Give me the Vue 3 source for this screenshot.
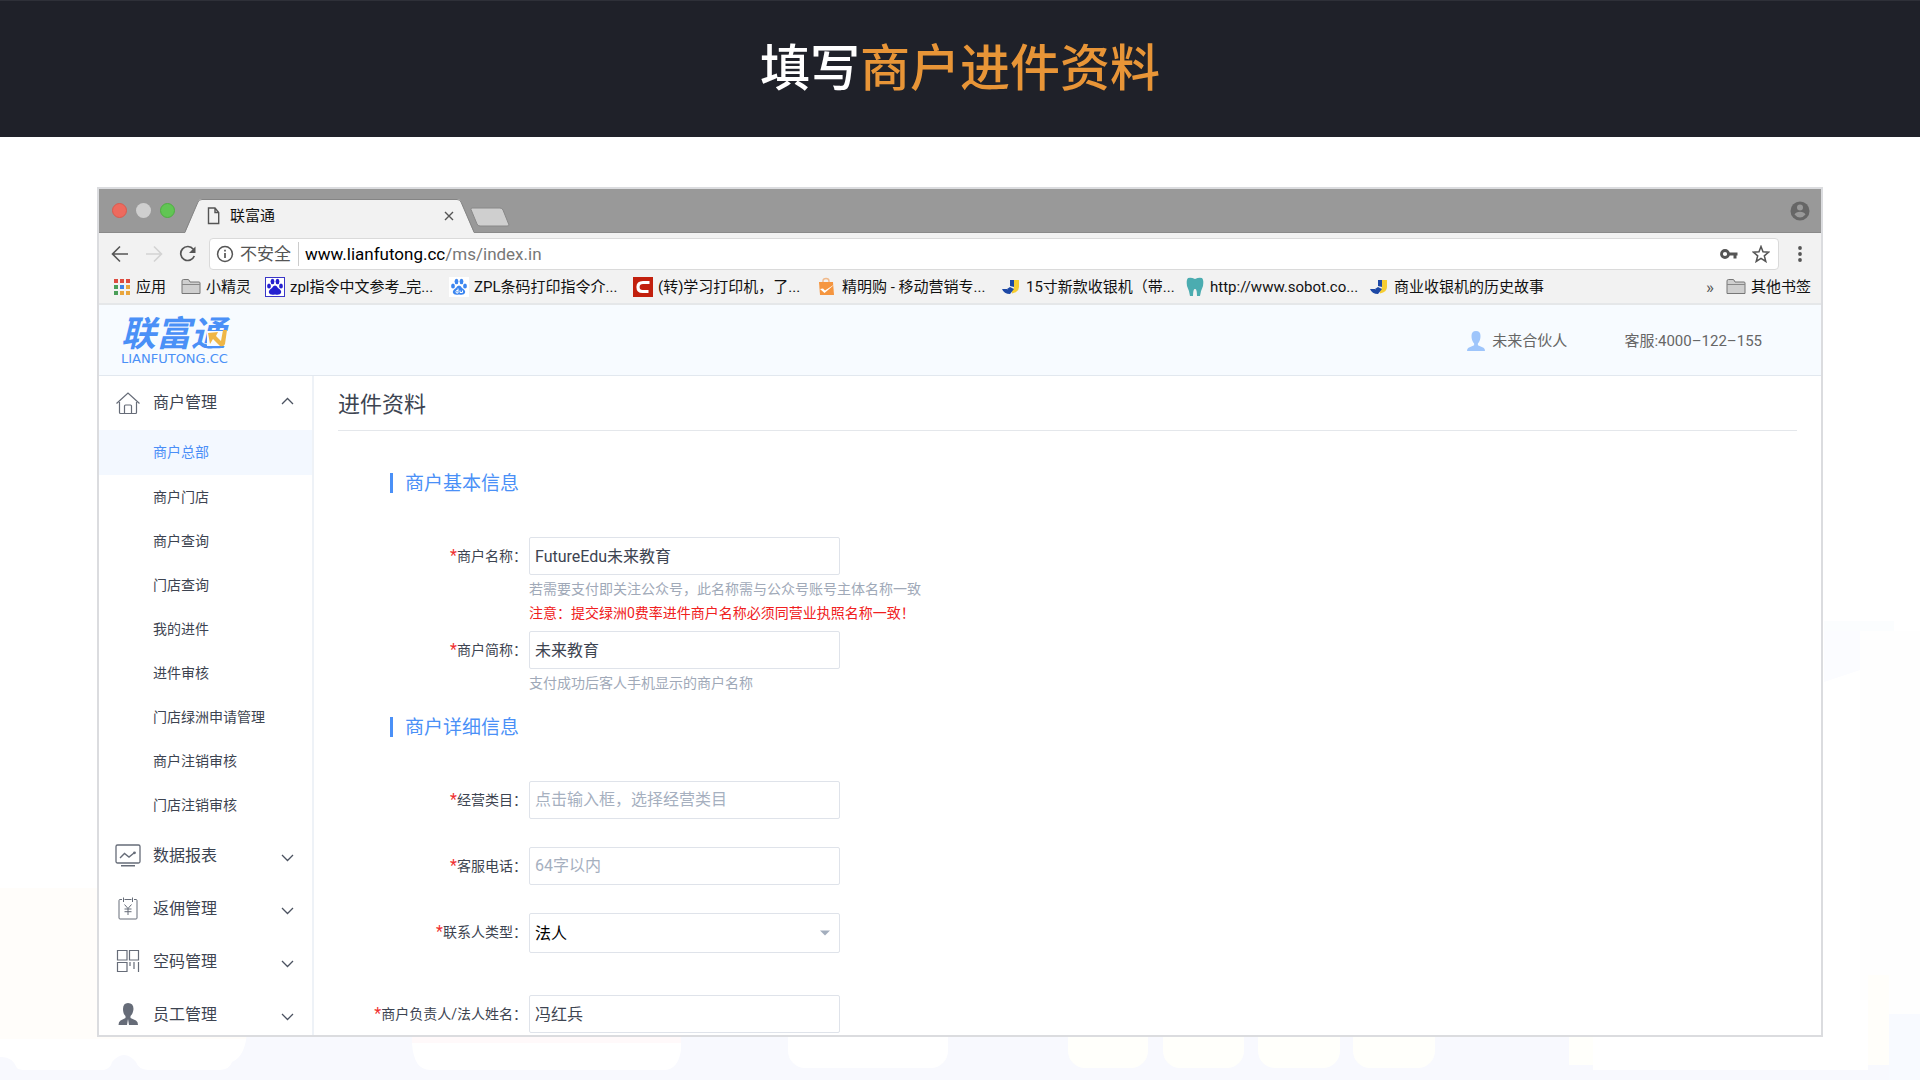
<script setup>
import { ref } from 'vue'

const bookmarks = [
  { icon: 'paw-box', text: 'zpl指令中文参考_完...' },
  { icon: 'paw', text: 'ZPL条码打印指令介...' },
  { icon: 'c', text: '(转)学习打印机，了...' },
  { icon: 'bag', text: '精明购 - 移动营销专...' },
  { icon: 'j', text: '15寸新款收银机（带...' },
  { icon: 'tooth', text: 'http://www.sobot.co...' },
  { icon: 'j', text: '商业收银机的历史故事' },
]
const appDots = ['#de4b3f', '#de4b3f', '#de4b3f', '#4a9e58', '#3f82e8', '#e9a53c', '#4a9e58', '#e9a53c', '#e9a53c']
const subItems = ['商户总部', '商户门店', '商户查询', '门店查询', '我的进件', '进件审核', '门店绿洲申请管理', '商户注销审核', '门店注销审核']
const groups = [
  { icon: 'chart', text: '数据报表' },
  { icon: 'yen', text: '返佣管理' },
  { icon: 'code', text: '空码管理' },
  { icon: 'person', text: '员工管理' },
]
const name = ref('FutureEdu未来教育')
const shortName = ref('未来教育')
const category = ref('')
const phone = ref('')
const contactType = ref('法人')
const owner = ref('冯红兵')
</script>

<template>
  <div class="page">
    <svg class="decor" viewBox="0 600 1920 480" preserveAspectRatio="none" aria-hidden="true">
      <rect x="1824" y="621" width="70" height="10" fill="#fbfdfe" />
      <path d="M1824 631H1860V670L1824 682Z" fill="#fbfcff" />
      <rect x="1860" y="631" width="60" height="383" fill="#fefefe" />
      <rect y="888" width="247" height="151" fill="#fffdfa" />
      <path d="M0 1057Q12 1056 17 1068Q19 1070 26 1070H104Q111 1068 112 1062Q124 1048 136 1062Q138 1069 148 1070H220Q230 1069 232 1062Q246 1056 247 1030H1920V1080H0Z" fill="#f8f9fe" />
      <path d="M412 1030H681V1050Q678 1070 664 1070H430Q414 1070 412 1044Z" fill="#fff" />
      <rect x="412" y="1030" width="269" height="13" fill="#fff9fa" />
      <rect x="788" y="1000" width="160" height="68" rx="17" fill="#fff" />
      <rect x="1068" y="1000" width="80" height="68" rx="17" fill="#fffffb" />
      <rect x="1163" y="1000" width="81" height="68" rx="17" fill="#fffffb" />
      <rect x="1258" y="1000" width="82" height="68" rx="17" fill="#fffffb" />
      <rect x="1353" y="1000" width="82" height="68" rx="17" fill="#fffffb" />
      <rect x="1569" y="1000" width="24" height="65" fill="#fffffb" />
      <rect x="1593" y="1000" width="275" height="70" fill="#fff" />
      <rect x="1868" y="975" width="21" height="90" fill="#fffefa" />
      <rect x="1889" y="1014" width="31" height="66" fill="#f8faff" />
    </svg>

    <header class="banner">
      <h1>填写<span>商户进件资料</span></h1>
    </header>

    <div class="window">
      <div class="tabstrip">
        <div class="lights"><i class="red"></i><i class="grey"></i><i class="green"></i></div>
        <div class="tab">
          <svg class="tab-shape" viewBox="0 0 289 34" preserveAspectRatio="none" aria-hidden="true">
            <path d="M0 34L13 3Q14 0 17 0H272Q275 0 276 3L289 34Z" fill="#f2f2f2" />
            <path d="M0 33L13 3Q14 .5 17 .5H272Q275 .5 276 3L289 33" fill="none" stroke="#858585" />
          </svg>
          <svg class="doc" viewBox="0 0 12 18" aria-hidden="true"><path d="M1 1H7.5L11.200 5.500V16.500H1ZM7.500 1V5.500H11" fill="none" stroke="#555" stroke-width="1.400" /></svg>
          <span class="tab-title">联富通</span>
          <button class="plain" aria-label="关闭标签页">
            <svg width="10" height="10" viewBox="0 0 10 10"><path d="M1 1L9 9M9 1L1 9" stroke="#555" stroke-width="1.400" /></svg>
          </button>
        </div>
        <button class="plain newtab" aria-label="新标签页">
          <svg width="40" height="20" viewBox="0 0 40 20"><path d="M2 1H30Q32 1 33 3L39 18Q39 19 37 19H10Q8 19 7 17L1 2.500Q1 1 2 1Z" fill="#cfcfcf" stroke="#888" /></svg>
        </button>
        <svg class="profile" width="20" height="20" viewBox="0 0 20 20" aria-hidden="true">
          <circle cx="10" cy="10" r="9.500" fill="#666" /><circle cx="10" cy="6.500" r="3" fill="#999" /><path d="M4.500 13.500Q6 10.800 10 10.800T15.500 13.500Q13 16.500 10 16.500T4.500 13.500Z" fill="#999" />
        </svg>
      </div>

      <div class="toolbar">
        <button class="plain" aria-label="后退"><svg width="18" height="18" viewBox="0 0 18 18"><path d="M17 9H2M9 1.500L1.500 9L9 16.500" fill="none" stroke="#555" stroke-width="1.600" /></svg></button>
        <button class="plain" aria-label="前进"><svg width="18" height="18" viewBox="0 0 18 18"><path d="M1 9H16M9 1.500L16.500 9L9 16.500" fill="none" stroke="#d3d3d3" stroke-width="1.600" /></svg></button>
        <button class="plain" aria-label="刷新"><svg width="18" height="18" viewBox="0 0 18 18"><path d="M14.300 4.200A7 7 0 1 0 15.300 11" fill="none" stroke="#555" stroke-width="1.700" /><path d="M16.500 1.500V8H10Z" fill="#555" /></svg></button>
        <div class="omnibox">
          <svg width="18" height="18" viewBox="0 0 18 18" aria-hidden="true"><circle cx="9" cy="9" r="7.400" fill="none" stroke="#555" stroke-width="1.500" /><path d="M9 8V13M9 4.800V6.600" stroke="#555" stroke-width="1.700" /></svg>
          <span class="insecure">不安全</span>
          <span class="url"><b>www.lianfutong.cc</b>/ms/index.in</span>
          <svg class="key" width="18" height="12" viewBox="0 0 18 12" aria-hidden="true"><circle cx="5" cy="6" r="3.500" fill="none" stroke="#555" stroke-width="2.800" /><path d="M8 6H17.500M15 6V10.500" stroke="#555" stroke-width="3" /></svg>
          <svg width="18" height="18" viewBox="0 0 18 18" aria-hidden="true"><path d="M9 1.500L11 6.800L16.700 7.200L12.300 10.800L13.800 16.500L9 13.400L4.200 16.500L5.700 10.800L1.300 7.200L7 6.800Z" fill="none" stroke="#555" stroke-width="1.500" /></svg>
        </div>
        <button class="plain" aria-label="菜单"><svg width="6" height="18" viewBox="0 0 6 18"><g fill="#555"><circle cx="3" cy="3" r="1.900" /><circle cx="3" cy="9" r="1.900" /><circle cx="3" cy="15" r="1.900" /></g></svg></button>
      </div>

      <nav class="bookmarks" aria-label="书签">
        <a href="#" class="apps">
          <svg width="18" height="20" viewBox="0 0 18 20"><rect v-for="(c, i) in appDots" :key="i" :x="1 + (i % 3) * 6" :y="2 + Math.floor(i / 3) * 6" width="4" height="4" :fill="c" /></svg>应用</a>
        <a href="#" class="folder">
          <svg width="20" height="20" viewBox="0 0 20 20"><path d="M1 16.500V4Q1 2.500 2.500 2.500H7Q8 2.500 8.500 4L9 5H18Q19 5 19 6V16.500Z" fill="#cfcfcf" stroke="#777" /><path d="M1 7.500H19" stroke="#888" /></svg>小精灵</a>
        <a v-for="b in bookmarks" :key="b.text" href="#" class="mark">
          <svg v-if="b.icon === 'paw-box' || b.icon === 'paw'" width="20" height="20" viewBox="0 0 20 20" :class="b.icon">
            <rect v-if="b.icon === 'paw-box'" x=".5" y=".5" width="19" height="19" fill="#fff" stroke="#3a36c8" />
            <rect v-else width="20" height="20" fill="#fff" />
            <g fill="currentColor"><ellipse cx="4" cy="9" rx="1.900" ry="2.500" /><ellipse cx="7.500" cy="4.500" rx="1.900" ry="2.700" /><ellipse cx="12.500" cy="4.500" rx="1.900" ry="2.700" /><ellipse cx="16" cy="9" rx="1.900" ry="2.500" /><path d="M10 8.500Q12 8.500 13 11Q17 13.500 16 16Q15 18.500 10 17.500Q5 18.500 4 16Q3 13.500 7 11Q8 8.500 10 8.500Z" /></g>
            <path v-if="b.icon === 'paw'" d="M9 11.500V16H7.500Q6.300 14.800 7.500 13.500H9M11 13.500V15.500H13.500V13.500" fill="none" stroke="#fff" />
          </svg>
          <svg v-else-if="b.icon === 'c'" width="20" height="20" viewBox="0 0 20 20"><rect width="20" height="20" fill="#c2200e" /><path d="M16.500 5.500H10Q5 5.500 5 10T9.500 14.500H15.500" fill="none" stroke="#fff" stroke-width="3.200" /></svg>
          <svg v-else-if="b.icon === 'bag'" width="20" height="20" viewBox="0 0 20 20"><path d="M6 6V4Q6 1.500 9 1.500T12 4V6" fill="none" stroke="#f0b98a" stroke-width="1.400" /><path d="M2 5H16L17 18H3Z" fill="#f59640" /><path d="M3 12L6 11.500L8 13.500L18 7L7.500 16Z" fill="#fff" /></svg>
          <svg v-else-if="b.icon === 'j'" width="20" height="20" viewBox="0 0 20 20"><path d="M9 3H13V10L9 9ZM1 12H6Q7 14 9 13V17Q3 17 1 12Z" fill="#1d48a5" /><path d="M13 3H18V10Q18 15 11 16.500V13Q13 12 13 10Z" fill="#f6cd32" /><path d="M6 12L9 10L13 12L9 17Z" fill="#1d48a5" /></svg>
          <svg v-else width="20" height="20" viewBox="0 0 20 20"><path d="M3 1Q6 0 10 2Q14 0 17 1Q19 3 18 9Q16 13 15 19H12Q12 13 10.500 12H9.500Q8 13 8 19H5Q4 13 2 9Q1 3 3 1Z" fill="#4bacb0" /></svg>
          {{ b.text }}
        </a>
        <span class="more">»</span>
        <a href="#">
          <svg width="20" height="20" viewBox="0 0 20 20"><path d="M1 16.500V4Q1 2.500 2.500 2.500H7Q8 2.500 8.500 4L9 5H18Q19 5 19 6V16.500Z" fill="#cfcfcf" stroke="#777" /><path d="M1 7.500H19" stroke="#888" /></svg>其他书签</a>
      </nav>

      <header class="site-head">
        <a href="#" class="logo">
          <span class="logo-cn">联富通</span>
          <span class="logo-en">LIANFUTONG.CC</span>
          <svg class="logo-arrow" width="24" height="20" viewBox="0 0 24 20" aria-hidden="true">
            <path d="M3 3H24V18H3Z" fill="#f7fbff" />
            <path d="M4 5L14 4L12 8L17 13L19 2H23L21 16Q20 19 16 18L9 11L6 16Z" fill="#efb646" />
          </svg>
        </a>
        <div class="account">
          <svg width="18" height="20" viewBox="0 0 24 24" preserveAspectRatio="none" aria-hidden="true"><path d="M12 0Q18 0 18 6Q18 12 14.500 15V17L22 20Q24 21 24 24H0Q0 21 2 20L9.500 17V15Q6 12 6 6Q6 0 12 0Z" fill="#9ec5fb" /></svg>
          未来合伙人
        </div>
        <div class="service">客服:4000–122–155</div>
      </header>

      <div class="body">
        <nav class="sidebar" aria-label="主菜单">
          <button class="group">
            <svg class="gicon" viewBox="0 0 26 26"><path d="M1.500 13.500L13 3L24.500 13.500M4.500 12V22.500Q4.500 23.500 5.500 23.500H20.500Q21.500 23.500 21.500 22.500V12M9.500 23V16Q9.500 15 10.500 15H15.500Q16.500 15 16.500 16V23" fill="none" stroke="#666c78" stroke-width="1.200" /></svg>
            <span>商户管理</span>
            <svg class="chev" viewBox="0 0 12 8"><path d="M.5 7L6 1.500L11.500 7" fill="none" stroke="#4b5260" stroke-width="1.300" /></svg>
          </button>
          <ul>
            <li v-for="(s, i) in subItems" :key="s"><a href="#" :class="{ active: i === 0 }">{{ s }}</a></li>
          </ul>
          <button v-for="g in groups" :key="g.icon" class="group">
            <svg v-if="g.icon === 'chart'" class="gicon" viewBox="0 0 26 26"><rect x="1" y="2" width="24" height="18" rx="1.500" fill="none" stroke="#666c78" stroke-width="1.300" /><path d="M5 15L9.500 10.500L14 14L19 10M6 22.700H20" fill="none" stroke="#666c78" stroke-width="1.400" /><circle cx="19.500" cy="9.800" r="1.400" fill="#666c78" /></svg>
            <svg v-else-if="g.icon === 'yen'" class="gicon" viewBox="0 0 26 26"><path d="M7 3.500H5Q4 3.500 4 4.500V22Q4 23 5 23H21Q22 23 22 22V4.500Q22 3.500 21 3.500H19M9.500 3.500H16.500M8.500 1.500V6M17.500 1.500V6M9.500 8.500L13 12.500L16.500 8.500M13 12.500V19M9.500 13H16.500M9.500 15.700H16.500" fill="none" stroke="#666c78" /></svg>
            <svg v-else-if="g.icon === 'code'" class="gicon" viewBox="0 0 26 26"><path d="M2.500 1.500H12V11H2.500ZM14.500 1.500H23.500V11H14.500ZM2.500 13.500H12V22.500H2.500ZM15 13V17M19 13V20M23.500 13V23" fill="none" stroke="#666c78" stroke-width="1.200" /></svg>
            <svg v-else class="gicon" viewBox="0 0 26 26"><path d="M13 1Q18.500 1 18.500 7Q18 12 15.500 14V16L21 18.500Q23 19.500 23 23H14L13 17L12 23H3.500Q3.500 19.500 5.500 18.500L10.500 16V14Q8 12 8 7Q8 1 13 1Z" fill="#666c78" /></svg>
            <span>{{ g.text }}</span>
            <svg class="chev low" viewBox="0 0 12 8"><path d="M.5 1L6 6.500L11.500 1" fill="none" stroke="#4b5260" stroke-width="1.300" /></svg>
          </button>
        </nav>

        <main class="main">
          <h2>进件资料</h2>
          <form @submit.prevent>
            <h3>商户基本信息</h3>
            <div class="row">
              <label for="name"><em>*</em>商户名称：</label>
              <div class="field">
                <input id="name" v-model="name" type="text" />
                <div class="hints">
                  <p>若需要支付即关注公众号，此名称需与公众号账号主体名称一致</p>
                  <p class="warn">注意：提交绿洲0费率进件商户名称必须同营业执照名称一致！</p>
                </div>
              </div>
            </div>
            <div class="row near">
              <label for="short"><em>*</em>商户简称：</label>
              <div class="field">
                <input id="short" v-model="shortName" type="text" />
                <div class="hints"><p>支付成功后客人手机显示的商户名称</p></div>
              </div>
            </div>
            <h3 class="second">商户详细信息</h3>
            <div class="row">
              <label for="category"><em>*</em>经营类目：</label>
              <div class="field"><input id="category" v-model="category" type="text" placeholder="点击输入框，选择经营类目" /></div>
            </div>
            <div class="row spaced">
              <label for="phone"><em>*</em>客服电话：</label>
              <div class="field"><input id="phone" v-model="phone" type="text" placeholder="64字以内" /></div>
            </div>
            <div class="row spaced">
              <label for="contact"><em>*</em>联系人类型：</label>
              <div class="field select">
                <select id="contact" v-model="contactType"><option>法人</option></select>
                <svg width="10" height="6" viewBox="0 0 10 6" aria-hidden="true"><path d="M0 .5H10L5 5.500Z" fill="#a3aebd" /></svg>
              </div>
            </div>
            <div class="row far">
              <label for="owner"><em>*</em>商户负责人/法人姓名：</label>
              <div class="field"><input id="owner" v-model="owner" type="text" /></div>
            </div>
          </form>
        </main>
      </div>
    </div>
  </div>
</template>

<style>
body { margin: 0; background: #fff; }
</style>

<style scoped>
* { box-sizing: border-box; }
.page {
  position: relative;
  display: flex;
  flex-direction: column;
  height: 100vh;
  overflow: hidden;
  font-family: Roboto, "Noto Sans CJK SC", sans-serif;
  color: #3d4451;
}
.page svg { flex: none; display: block; }
button, input, select { font: inherit; color: inherit; }
a { color: inherit; text-decoration: none; }
h1, h2, h3, p, ul { margin: 0; padding: 0; font-weight: 400; }
ul { list-style: none; }
.plain { display: flex; padding: 0; border: 0; background: none; }

.page .decor { position: absolute; left: 0; bottom: 0; width: 100%; height: 480px; }
.banner {
  flex: none;
  height: 137px;
  border-top: 1px solid #2e3038;
  background: #1f2129;
  display: flex;
  align-items: center;
  justify-content: center;
}
.banner h1 { color: #fff; font-size: 50px; line-height: 74px; font-weight: 500; }
.banner span { color: #e89537; }

.window {
  position: relative;
  flex: 1;
  min-height: 0;
  margin: 50px 97px 43px;
  border: 2px solid #dbdcdf;
  overflow: hidden;
  background: #fff;
  display: flex;
  flex-direction: column;
}
.tabstrip {
  flex: none;
  display: flex;
  align-items: flex-end;
  height: 44px;
  padding: 0 11px 0 13px;
  background: #999;
  border-bottom: 1px solid #8a8a8a;
}
.lights { display: flex; gap: 9px; width: 73px; align-self: center; }
.lights i { width: 15px; height: 15px; border-radius: 50%; }
.red { background: #ed6a5e; border: 1px solid #d95a4e; }
.grey { background: #cfcfcf; }
.green { background: #61c554; border: 1px solid #4eae42; }
.tab {
  position: relative;
  display: flex;
  align-items: center;
  width: 289px;
  height: 34px;
  margin-bottom: -1px;
  padding: 0 20px 0 22px;
}
.page .tab-shape { position: absolute; left: 0; top: 0; width: 100%; height: 100%; }
.doc { position: relative; width: 13px; height: 18px; }
.tab-title { position: relative; flex: 1; margin-left: 10px; font-size: 15px; line-height: 20px; color: #111; }
.tab .plain { position: relative; }
.newtab { margin: 0 auto 5px -4px; }
.profile { align-self: center; }

.toolbar {
  flex: none;
  display: flex;
  align-items: center;
  height: 42px;
  padding: 0 18px 0 12px;
  gap: 16px;
  background: #f2f2f2;
}
.omnibox {
  flex: 1;
  display: flex;
  align-items: center;
  height: 32px;
  margin: 0 2px 0 -4px;
  padding: 0 8px 0 6px;
  border: 1px solid #dadada;
  border-radius: 4px;
  background: #fff;
  font-size: 17px;
  line-height: 24px;
}
.insecure { margin-left: 6px; padding-right: 7px; border-right: 1px solid #ccc; color: #555; }
.url { flex: 1; padding-left: 6px; color: #777; }
.url b { font-weight: 400; color: #000; }
.key { margin-right: 14px; }

.bookmarks {
  flex: none;
  display: flex;
  align-items: center;
  height: 30px;
  padding: 0 10px 4px 14px;
  border-bottom: 2px solid #e5e7e9;
  background: #f2f2f2;
  color: #111;
  font-size: 15px;
  line-height: 22px;
  white-space: nowrap;
}
.bookmarks a { display: flex; align-items: center; gap: 5px; }
.apps { width: 68px; }
.folder { width: 84px; }
.mark { width: 184px; }
.paw-box { color: #2420d0; }
.paw { color: #3c86f0; }
.more { margin-left: auto; margin-right: 12px; color: #555; font-size: 17px; }

.site-head {
  flex: none;
  display: flex;
  align-items: center;
  height: 71px;
  padding: 2px 59px 0 22px;
  border-bottom: 1px solid #e2e8ef;
  background: #f7fbff;
  color: #666;
  font-size: 15px;
  line-height: 24px;
}
.logo { position: relative; display: flex; flex-direction: column; margin-right: auto; color: #4a90f7; }
.logo-cn { font-size: 35px; line-height: 36px; font-weight: 700; font-style: italic; }
.logo-en { font-family: "DejaVu Sans", sans-serif; font-size: 13px; line-height: 12px; }
.page .logo-arrow { position: absolute; right: 0; top: 11px; }
.account { display: flex; align-items: center; gap: 7px; }
.service { margin-left: 57px; }

.body { flex: 1; min-height: 0; display: flex; }
.sidebar { flex: none; width: 215px; border-right: 2px solid #eef2f7; }
.group {
  display: flex;
  align-items: center;
  width: 100%;
  height: 53px;
  padding: 0 18px 0 16px;
  border: 0;
  background: none;
  font-size: 16px;
  line-height: 24px;
  text-align: left;
}
.group span { flex: 1; margin-left: 12px; }
.gicon { width: 26px; height: 26px; }
.chev { width: 13px; height: 8px; margin-bottom: 4px; }
.chev.low { margin: 4px 0 0; }
.sidebar ul { padding: 1px 0 2px; font-size: 14px; }
.sidebar li a { display: block; padding-left: 54px; line-height: 44px; }
.sidebar li a.active { line-height: 45px; background: #f3f8ff; color: #4a8ef7; }

.main { flex: 1; padding: 0 24px; }
.main h2 { height: 55px; border-bottom: 1px solid #e4e7eb; font-size: 22px; line-height: 58px; }
.main h3 {
  height: 20px;
  margin: 42px 0 44px 52px;
  padding-left: 12px;
  border-left: 3px solid #4a90f7;
  color: #4a90f7;
  font-size: 19px;
  line-height: 22px;
}
.main h3.second { margin-top: 22px; }
.row { display: flex; align-items: flex-start; font-size: 14px; }
.near { margin-top: 6px; }
.spaced { margin-top: 28px; }
.far { margin-top: 42px; }
.row label { width: 191px; padding-right: 2px; line-height: 38px; text-align: right; white-space: nowrap; }
.row em { color: #f03030; font-size: 16px; font-style: normal; }
.field { position: relative; width: 311px; }
.field input, .field select {
  display: block;
  width: 100%;
  height: 38px;
  padding: 0 5px 2px;
  border: 1px solid #dfe3ea;
  border-radius: 2px;
  background: #fff;
  font-size: 16px;
}
.field select { height: 40px; padding: 0 5px; appearance: none; color: #000; }
.field input::placeholder { color: #a6b0bf; opacity: 1; }
.field.select svg { position: absolute; right: 10px; top: 17px; }
.hints { padding-top: 2px; color: #a0a9b8; line-height: 24px; white-space: nowrap; }
.warn { color: #f02020; }
</style>
